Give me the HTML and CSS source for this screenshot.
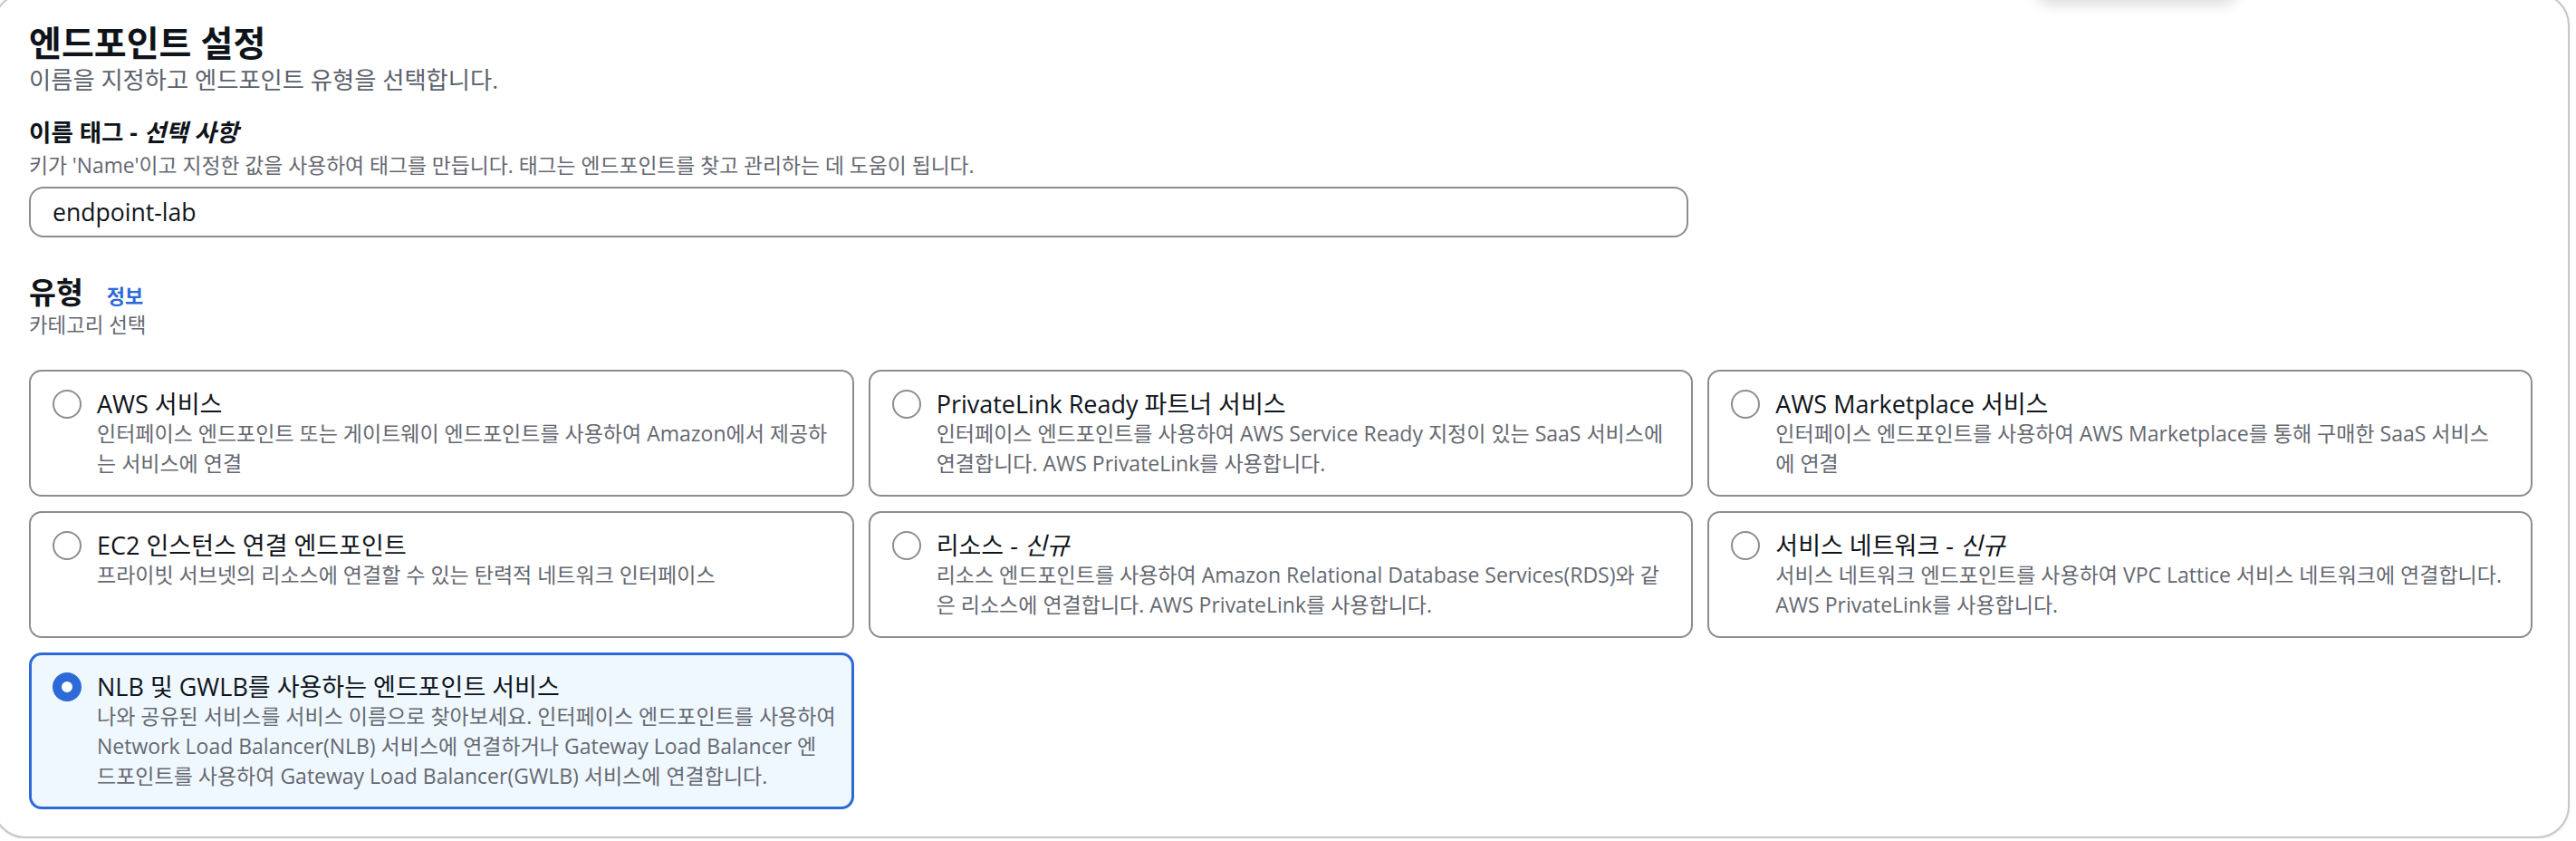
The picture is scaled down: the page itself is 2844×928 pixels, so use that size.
FILE: index.html
```html
<!DOCTYPE html>
<html lang="ko">
<head>
<meta charset="utf-8">
<title>엔드포인트 설정</title>
<link rel="stylesheet" href="styles.css">
</head>
<body>
<div class="float-shadow"></div>
<section class="panel">
  <header class="panel-header">
    <h2 class="panel-title">엔드포인트 설정</h2>
    <p class="panel-desc">이름을 지정하고 엔드포인트 유형을 선택합니다.</p>
  </header>

  <div class="field">
    <label class="field-label" for="name-tag">이름 태그 - <i>선택 사항</i></label>
    <p class="field-desc">키가 'Name'이고 지정한 값을 사용하여 태그를 만듭니다. 태그는 엔드포인트를 찾고 관리하는 데 도움이 됩니다.</p>
    <input class="text-input" id="name-tag" type="text" value="endpoint-lab">
  </div>

  <div class="type-section">
    <div class="type-head">
      <h3 class="type-title">유형</h3>
      <a class="info-link">정보</a>
    </div>
    <p class="field-desc cat-desc">카테고리 선택</p>

    <div class="tiles">
      <div class="tile">
        <span class="radio"></span>
        <div class="tile-body">
          <div class="tile-title">AWS 서비스</div>
          <div class="tile-desc">인터페이스 엔드포인트 또는 게이트웨이 엔드포인트를 사용하여 Amazon에서 제공하<br>는 서비스에 연결</div>
        </div>
      </div>
      <div class="tile">
        <span class="radio"></span>
        <div class="tile-body">
          <div class="tile-title">PrivateLink Ready 파트너 서비스</div>
          <div class="tile-desc">인터페이스 엔드포인트를 사용하여 AWS Service Ready 지정이 있는 SaaS 서비스에<br>연결합니다. AWS PrivateLink를 사용합니다.</div>
        </div>
      </div>
      <div class="tile">
        <span class="radio"></span>
        <div class="tile-body">
          <div class="tile-title">AWS Marketplace 서비스</div>
          <div class="tile-desc">인터페이스 엔드포인트를 사용하여 AWS Marketplace를 통해 구매한 SaaS 서비스<br>에 연결</div>
        </div>
      </div>
      <div class="tile">
        <span class="radio"></span>
        <div class="tile-body">
          <div class="tile-title">EC2 인스턴스 연결 엔드포인트</div>
          <div class="tile-desc">프라이빗 서브넷의 리소스에 연결할 수 있는 탄력적 네트워크 인터페이스</div>
        </div>
      </div>
      <div class="tile">
        <span class="radio"></span>
        <div class="tile-body">
          <div class="tile-title">리소스 - <i>신규</i></div>
          <div class="tile-desc">리소스 엔드포인트를 사용하여 Amazon Relational Database Services(RDS)와 같<br>은 리소스에 연결합니다. AWS PrivateLink를 사용합니다.</div>
        </div>
      </div>
      <div class="tile">
        <span class="radio"></span>
        <div class="tile-body">
          <div class="tile-title">서비스 네트워크 - <i>신규</i></div>
          <div class="tile-desc">서비스 네트워크 엔드포인트를 사용하여 VPC Lattice 서비스 네트워크에 연결합니다.<br>AWS PrivateLink를 사용합니다.</div>
        </div>
      </div>
      <div class="tile tile-selected">
        <span class="radio radio-checked"></span>
        <div class="tile-body">
          <div class="tile-title">NLB 및 GWLB를 사용하는 엔드포인트 서비스</div>
          <div class="tile-desc">나와 공유된 서비스를 서비스 이름으로 찾아보세요. 인터페이스 엔드포인트를 사용하여<br>Network Load Balancer(NLB) 서비스에 연결하거나 Gateway Load Balancer 엔<br>드포인트를 사용하여 Gateway Load Balancer(GWLB) 서비스에 연결합니다.</div>
        </div>
      </div>
    </div>
  </div>
</section>
</body>
</html>
```

FILE: styles.css
```css
html, body {
  margin: 0;
  padding: 0;
  background: #ffffff;
}

body {
  font-family: "Open Sans", "Noto Sans CJK KR", sans-serif;
  color: #0f141a;
  overflow: hidden;
}

.float-shadow {
  position: absolute;
  top: -40px;
  left: 2248px;
  width: 222px;
  height: 40px;
  border-radius: 16px;
  background: #ffffff;
  box-shadow: 0 4px 16px rgba(0, 15, 30, 0.16);
}

.panel {
  margin: -8px 7px 0 -8px;
  padding: 31px 39px 30px 38px;
  border: 2px solid #c6c6cd;
  border-radius: 36px;
  background: #ffffff;
  box-shadow: 0 1px 3px rgba(0, 7, 22, 0.1);
}

.panel-title {
  margin: 0;
  font-size: 39px;
  line-height: 44px;
  font-weight: 700;
  color: #0f141a;
}

.panel-desc {
  margin: 2px 0 0;
  font-size: 26.3px;
  line-height: 34px;
  color: #5b616b;
}

.field {
  margin-top: 24px;
}

.field-label {
  display: block;
  font-size: 26.5px;
  line-height: 34px;
  font-weight: 700;
  color: #0f141a;
}

.field-desc {
  margin: 8px 0 0;
  font-size: 22.8px;
  line-height: 23px;
  color: #656871;
}

.text-input {
  display: block;
  box-sizing: border-box;
  width: 1832px;
  height: 56px;
  margin: 12px 0 0;
  padding: 0 24px;
  border: 2px solid #8c8c94;
  border-radius: 16px;
  font-family: "Open Sans", "Noto Sans CJK KR", sans-serif;
  font-size: 26.6px;
  color: #0f141a;
  background: #ffffff;
  outline: none;
}

.type-section {
  margin-top: 42px;
}

.type-head {
  display: flex;
  align-items: baseline;
  gap: 26px;
}

.type-title {
  margin: 0;
  font-size: 32.5px;
  line-height: 38px;
  font-weight: 700;
}

.info-link {
  font-size: 22px;
  font-weight: 700;
  color: #2d6ad8;
  text-decoration: none;
}

.cat-desc {
  margin-top: 3px;
  font-size: 22.4px;
  line-height: 28px;
}

.tiles {
  margin-top: 35px;
  display: grid;
  grid-template-columns: repeat(3, 1fr);
  gap: 16px;
}

.tile {
  display: flex;
  align-items: flex-start;
  gap: 17px;
  padding: 20px 20px 18px 24px;
  border: 2px solid #8c8c94;
  border-radius: 14px;
  background: #ffffff;
  min-width: 0;
}

.tile-selected {
  grid-column: 1;
  border: 3px solid #2d6ad8;
  padding: 19px 19px 17px 23px;
  background: #f0f8ff;
}

.radio {
  flex: none;
  box-sizing: border-box;
  width: 32px;
  height: 32px;
  border: 2px solid #8c8c94;
  border-radius: 50%;
  background: #ffffff;
}

.radio-checked {
  border: 10px solid #2d6ad8;
}

.tile-body {
  min-width: 0;
}

.tile-title {
  font-size: 27px;
  line-height: 32px;
  color: #0f141a;
  white-space: nowrap;
}

.tile-desc {
  font-size: 23px;
  line-height: 33px;
  color: #656871;
  white-space: nowrap;
}
```
